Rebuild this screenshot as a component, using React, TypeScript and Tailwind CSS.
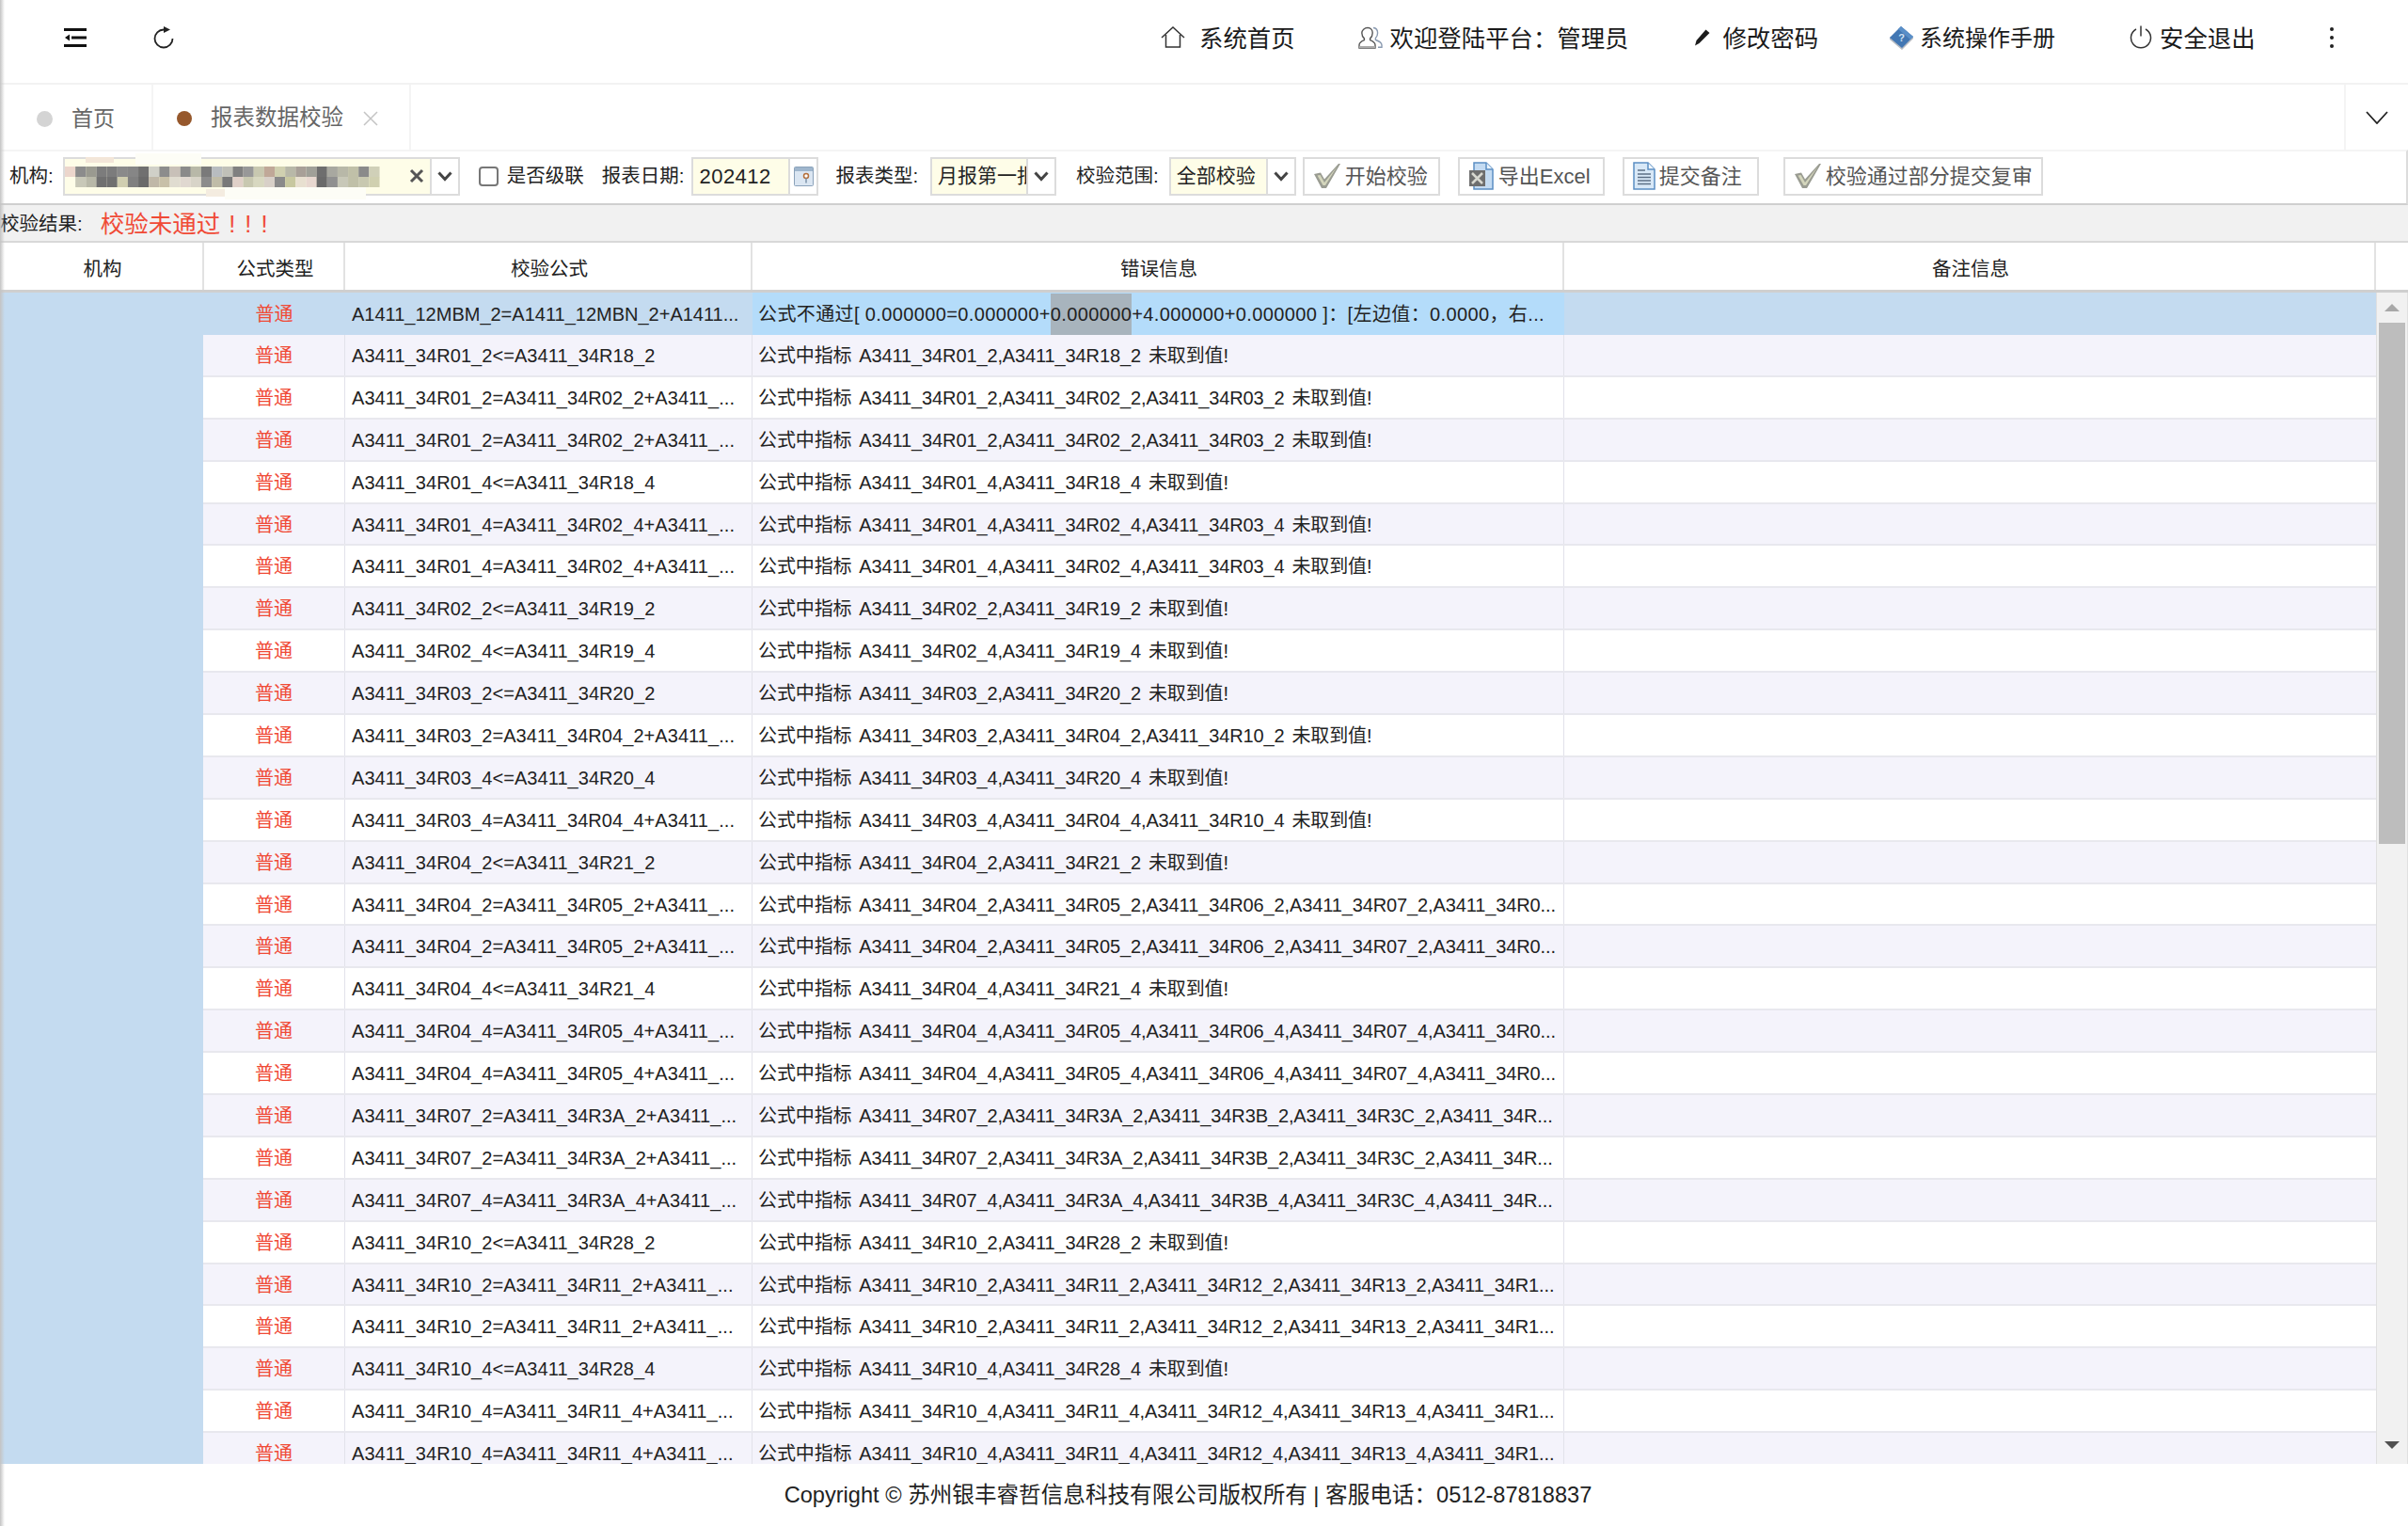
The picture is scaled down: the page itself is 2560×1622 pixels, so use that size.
import { ReactNode } from "react";

type Row = { formula: string; message: string };

const msg = (indicators: string) => `公式中指标 ${indicators} 未取到值!`;

const rows: Row[] = [
  { formula: "A3411_34R01_2<=A3411_34R18_2", message: msg("A3411_34R01_2,A3411_34R18_2") },
  { formula: "A3411_34R01_2=A3411_34R02_2+A3411_...", message: msg("A3411_34R01_2,A3411_34R02_2,A3411_34R03_2") },
  { formula: "A3411_34R01_2=A3411_34R02_2+A3411_...", message: msg("A3411_34R01_2,A3411_34R02_2,A3411_34R03_2") },
  { formula: "A3411_34R01_4<=A3411_34R18_4", message: msg("A3411_34R01_4,A3411_34R18_4") },
  { formula: "A3411_34R01_4=A3411_34R02_4+A3411_...", message: msg("A3411_34R01_4,A3411_34R02_4,A3411_34R03_4") },
  { formula: "A3411_34R01_4=A3411_34R02_4+A3411_...", message: msg("A3411_34R01_4,A3411_34R02_4,A3411_34R03_4") },
  { formula: "A3411_34R02_2<=A3411_34R19_2", message: msg("A3411_34R02_2,A3411_34R19_2") },
  { formula: "A3411_34R02_4<=A3411_34R19_4", message: msg("A3411_34R02_4,A3411_34R19_4") },
  { formula: "A3411_34R03_2<=A3411_34R20_2", message: msg("A3411_34R03_2,A3411_34R20_2") },
  { formula: "A3411_34R03_2=A3411_34R04_2+A3411_...", message: msg("A3411_34R03_2,A3411_34R04_2,A3411_34R10_2") },
  { formula: "A3411_34R03_4<=A3411_34R20_4", message: msg("A3411_34R03_4,A3411_34R20_4") },
  { formula: "A3411_34R03_4=A3411_34R04_4+A3411_...", message: msg("A3411_34R03_4,A3411_34R04_4,A3411_34R10_4") },
  { formula: "A3411_34R04_2<=A3411_34R21_2", message: msg("A3411_34R04_2,A3411_34R21_2") },
  { formula: "A3411_34R04_2=A3411_34R05_2+A3411_...", message: "公式中指标 A3411_34R04_2,A3411_34R05_2,A3411_34R06_2,A3411_34R07_2,A3411_34R0..." },
  { formula: "A3411_34R04_2=A3411_34R05_2+A3411_...", message: "公式中指标 A3411_34R04_2,A3411_34R05_2,A3411_34R06_2,A3411_34R07_2,A3411_34R0..." },
  { formula: "A3411_34R04_4<=A3411_34R21_4", message: msg("A3411_34R04_4,A3411_34R21_4") },
  { formula: "A3411_34R04_4=A3411_34R05_4+A3411_...", message: "公式中指标 A3411_34R04_4,A3411_34R05_4,A3411_34R06_4,A3411_34R07_4,A3411_34R0..." },
  { formula: "A3411_34R04_4=A3411_34R05_4+A3411_...", message: "公式中指标 A3411_34R04_4,A3411_34R05_4,A3411_34R06_4,A3411_34R07_4,A3411_34R0..." },
  { formula: "A3411_34R07_2=A3411_34R3A_2+A3411_...", message: "公式中指标 A3411_34R07_2,A3411_34R3A_2,A3411_34R3B_2,A3411_34R3C_2,A3411_34R..." },
  { formula: "A3411_34R07_2=A3411_34R3A_2+A3411_...", message: "公式中指标 A3411_34R07_2,A3411_34R3A_2,A3411_34R3B_2,A3411_34R3C_2,A3411_34R..." },
  { formula: "A3411_34R07_4=A3411_34R3A_4+A3411_...", message: "公式中指标 A3411_34R07_4,A3411_34R3A_4,A3411_34R3B_4,A3411_34R3C_4,A3411_34R..." },
  { formula: "A3411_34R10_2<=A3411_34R28_2", message: msg("A3411_34R10_2,A3411_34R28_2") },
  { formula: "A3411_34R10_2=A3411_34R11_2+A3411_...", message: "公式中指标 A3411_34R10_2,A3411_34R11_2,A3411_34R12_2,A3411_34R13_2,A3411_34R1..." },
  { formula: "A3411_34R10_2=A3411_34R11_2+A3411_...", message: "公式中指标 A3411_34R10_2,A3411_34R11_2,A3411_34R12_2,A3411_34R13_2,A3411_34R1..." },
  { formula: "A3411_34R10_4<=A3411_34R28_4", message: msg("A3411_34R10_4,A3411_34R28_4") },
  { formula: "A3411_34R10_4=A3411_34R11_4+A3411_...", message: "公式中指标 A3411_34R10_4,A3411_34R11_4,A3411_34R12_4,A3411_34R13_4,A3411_34R1..." },
  { formula: "A3411_34R10_4=A3411_34R11_4+A3411_...", message: "公式中指标 A3411_34R10_4,A3411_34R11_4,A3411_34R12_4,A3411_34R13_4,A3411_34R1..." },
];

// pixelated organisation name
const mosaicTop = ["#ecd6cc", "#8c8c8c", "#9a9a90", "#7c7c7c", "#7c7c7c", "#8a8a8a", "#868686", "#707070", "#d0d0c8", "#8c8c8c", "#c8c0b8", "#8a8a8a", "#b8b8a8", "#7a7a7a", "#b8bcc0", "#c0c0b8", "#808080", "#989898", "#c8c8b0", "#c0a898", "#d0d0b0", "#b8b8a8", "#a8a098", "#a0a098", "#6e6e6e", "#a8a8a0", "#b8b8a8", "#c0c0a8", "#8a8a8a", "#d0d0b8"];
const mosaicBottom = ["#fefde8", "#c8c8b8", "#b8b8a8", "#707070", "#707070", "#d0ceb0", "#808080", "#6a6a6a", "#c0b8a8", "#c8c0a8", "#e0dcd0", "#e0d8d0", "#d8d4c8", "#8c8c8c", "#c0bca8", "#787878", "#e0d0c8", "#c8c8b0", "#d8d8c0", "#d8d0c8", "#8a8a8a", "#c8c8a0", "#e8e0d0", "#e8d8d0", "#6a6a6a", "#909090", "#c8c8b8", "#c0c0a8", "#c8c8b0", "#d0d0b0"];

const Mosaic = () => (
  <svg width="345" height="49" viewBox="0 0 345 49" className="-my-1 shrink-0">
    <rect x="75" y="0" width="70" height="12" fill="#fdfdf6" />
    <rect x="170" y="36" width="150" height="13" fill="#fdfdf6" />
    <rect x="22" y="4" width="30" height="6" fill="#f3e6d8" />
    <rect x="150" y="38" width="20" height="8" fill="#f4ece0" />
    {mosaicTop.map((fill, i) => (
      <rect key={i} x={i * 11.15} y="14" width="11.2" height="11.2" fill={fill} />
    ))}
    {mosaicBottom.map((fill, i) => (
      <rect key={i} x={i * 11.15} y="25" width="11.2" height="11" fill={fill} />
    ))}
  </svg>
);

const ToggleIcon = () => (
  <svg width="24" height="20" viewBox="0 0 24 20" className="shrink-0">
    <rect x="0" y="0" width="24" height="3" fill="#111" />
    <rect x="8" y="8.5" width="16" height="3" fill="#111" />
    <path d="M1 10l5-3.5v7z" fill="#111" />
    <rect x="0" y="17" width="24" height="3" fill="#111" />
  </svg>
);

const RefreshIcon = () => (
  <svg width="22" height="24" viewBox="0 0 22 24" fill="none" className="shrink-0">
    <path d="M20.5 13a9.5 9.5 0 1 1-9.5-9.5h1" stroke="#222" strokeWidth="1.8" />
    <path d="M11 0l7 3.5-7 3.5z" fill="#222" />
  </svg>
);

const HomeIcon = () => (
  <svg width="26" height="23" viewBox="0 0 26 23" fill="none" className="shrink-0">
    <path d="M1 12L13 1l12 11" stroke="#333" strokeWidth="1.5" />
    <path d="M5.5 9v13h15V9" stroke="#333" strokeWidth="1.5" />
  </svg>
);

const UserIcon = () => (
  <svg width="26" height="24" viewBox="0 0 26 24" fill="none" className="shrink-0">
    <path d="M10 1.5c3.4 0 5.2 2.6 5.2 5.6 0 2.6-1.2 4.6-2.6 5.8v1.6c2.4 1 5.4 2.2 5.4 5.2v3.3H1v-3.3c0-3 3-4.2 5.4-5.200v-1.600C5 11.700 3.800 9.700 3.800 7.100c0-3 2.800-5.600 6.200-5.600z" stroke="#555" strokeWidth="1.4" />
    <path d="M16 1.500c3 .3 4.600 2.800 4.600 5.600 0 2.500-1 4.300-2.200 5.500v1.800c2.600 1 6.600 2.400 6.600 5.600v2.300h-4" stroke="#8a9ab0" strokeWidth="1.4" />
    <rect x="1" y="21" width="17" height="2" fill="#aaa" />
  </svg>
);

const PencilIcon = () => (
  <svg width="17" height="18" viewBox="0 0 17 18" className="shrink-0">
    <path d="M12.500 0.500l4 3.500L5.500 15 1 17.500 2.500 12z" fill="#1c1c1c" />
  </svg>
);

const BookIcon = () => (
  <svg width="27" height="27" viewBox="0 0 27 27" className="shrink-0">
    <path d="M1 15l13 11 12-12v-2L14 23 1 12z" fill="#b8bcc2" />
    <path d="M13 1l13 11-12 12L1 13z" fill="#4277b3" />
    <path d="M13 1l13 11-3 3L10 4z" fill="#5a8fc8" />
    <text x="13.500" y="17" fontSize="11" fontWeight="700" textAnchor="middle" fill="#cfe0f2" fontFamily="Liberation Sans">?</text>
  </svg>
);

const PowerIcon = () => (
  <svg width="24" height="25" viewBox="0 0 24 25" fill="none" className="shrink-0">
    <path d="M7 4a10.500 10.500 0 1 0 10 0" stroke="#333" strokeWidth="1.500" />
    <path d="M12 0.500v11" stroke="#333" strokeWidth="1.500" />
  </svg>
);

const CheckIcon = () => (
  <svg width="30" height="28" viewBox="0 0 30 28" className="shrink-0">
    <path d="M1 12l7-1.500 4 7L27 1h2L14 27H9z" fill="#9a9c92" />
    <path d="M4.500 13.500l3-.5 4.500 8L25.500 4 13 24h-2.500z" fill="#d4d6bc" />
  </svg>
);

const ExcelIcon = () => (
  <svg width="28" height="30" viewBox="0 0 28 30" className="shrink-0">
    <path d="M6 1h13l7 7v21H6z" fill="#c4dbf2" stroke="#5b8fc4" strokeWidth="1.500" />
    <path d="M19 1v7h7" fill="#eaf3fb" stroke="#5b8fc4" strokeWidth="1.500" />
    <rect x="1" y="9" width="17" height="17" fill="#6e6e6e" />
    <path d="M4 12l11 11M15 12L4 23" stroke="#d8d8d0" strokeWidth="2.500" />
  </svg>
);

const DocIcon = () => (
  <svg width="24" height="30" viewBox="0 0 24 30" className="shrink-0">
    <path d="M1 1h15l7 7v21H1z" fill="#d8e8f7" stroke="#5b8fc4" strokeWidth="1.500" />
    <path d="M16 1v7h7" fill="#f2f7fc" stroke="#5b8fc4" strokeWidth="1.500" />
    <path d="M5 9h8M5 13h14M5 16.500h14M5 20h14M5 23.500h14" stroke="#5c6f85" strokeWidth="1.400" />
  </svg>
);

const CalendarIcon = () => (
  <svg width="21" height="21" viewBox="0 0 21 21" className="shrink-0">
    <rect x="0.500" y="0.500" width="20" height="20" rx="1" fill="#dbe6f2" stroke="#8ba2ba" />
    <rect x="1" y="1" width="19" height="4" fill="#9fb6cd" />
    <circle cx="13" cy="10" r="2.500" fill="#fff" stroke="#b5703c" strokeWidth="1.500" />
    <path d="M13 12.500v5" stroke="#7d93aa" strokeWidth="1.500" />
  </svg>
);

const Chevron = () => (
  <svg width="16" height="11" viewBox="0 0 16 11" fill="none" className="shrink-0">
    <path d="M1.500 1.500L8 8.500l6.500-7" stroke="#444" strokeWidth="3" />
  </svg>
);

const NavItem = ({ icon, label, gap, className }: { icon: ReactNode; label: string; gap: string; className: string }) => (
  <div className={`flex items-center ${gap} ${className}`}>
    {icon}
    <span className="pt-[2px]">{label}</span>
  </div>
);

const SelectBox = ({ value, width }: { value: string; width: string }) => (
  <div className="flex h-[41px] border-2 border-[#dcdcdc] bg-white">
    <div className={`flex items-center overflow-hidden whitespace-nowrap bg-[#fefde8] pl-[6px] text-[21px] ${width}`}>{value}</div>
    <div className="flex w-[30px] items-center justify-center border-l-2 border-[#dcdcdc]">
      <Chevron />
    </div>
  </div>
);

const ToolButton = ({ icon, label, className }: { icon: ReactNode; label: string; className: string }) => (
  <button className={`flex h-[41px] items-center border-2 border-[#dcdcdc] bg-white pl-[9px] text-[22px] text-[#555] ${className}`}>
    {icon}
    <span className="ml-[4px] whitespace-nowrap">{label}</span>
  </button>
);

const HeaderCell = ({ label, className }: { label: string; className: string }) => (
  <div className={`flex items-center justify-center border-r-2 border-[#e2e2e2] pl-[3px] pt-[6px] ${className}`}>{label}</div>
);

const DataRow = ({ row, striped }: { row: Row; striped: boolean }) => (
  <div className={`flex h-[44.9px] shrink-0 border-b-2 border-[#e8e8ee] ${striped ? "bg-[#f4f3fb]" : "bg-white"}`}>
    <div className="flex w-[151px] shrink-0 items-center justify-center border-r border-[#e2e2ea] pt-[1px] text-[#f04a36]">普通</div>
    <div className="flex w-[433px] shrink-0 items-center whitespace-nowrap border-r border-[#e2e2ea] pl-[7px] pt-[1px] tracking-[0.06px]">{row.formula}</div>
    <div className="flex w-[863px] shrink-0 items-center whitespace-nowrap border-r border-[#e2e2ea] pl-[6px] pt-[1px] tracking-[-0.12px] [word-spacing:2.5px]">{row.message}</div>
    <div className="flex-1" />
  </div>
);

const SelectedRow = () => (
  <div className="flex h-[45px] shrink-0 bg-[#c4dbf0]">
    <div className="flex w-[151px] shrink-0 items-center justify-center text-[#f04a36]">普通</div>
    <div className="flex w-[433px] shrink-0 items-center whitespace-nowrap pl-[7px]">A1411_12MBM_2=A1411_12MBN_2+A1411...</div>
    <div className="flex w-[863px] shrink-0 items-center whitespace-pre bg-[#b4dcfa] pl-[6px] tracking-[0.38px]">
      <span>公式不通过[ 0.000000=0.000000+</span>
      <span className="bg-[#a8b4bd] py-[7px]">0.000000</span>
      <span>+4.000000+0.000000 ]：[左边值：0.0000，右...</span>
    </div>
    <div className="flex-1" />
  </div>
);

const App = () => {
  return (
    <div className="relative flex h-screen w-full flex-col overflow-hidden bg-white font-['Liberation_Sans','Noto_Sans_CJK_SC',sans-serif] text-[20px] text-[#222]">
      {/* sidebar shadow on the left edge */}
      <div className="pointer-events-none absolute inset-y-0 left-0 z-10 w-[5px] bg-gradient-to-r from-[#c4c4c4] to-transparent" />

      {/* top bar */}
      <header className="flex h-[90px] shrink-0 items-center border-b-2 border-[#f2f2f2] pb-[8px] text-[25.4px] text-[#1a1a1a]">
        <div className="ml-[68px]">
          <ToggleIcon />
        </div>
        <div className="ml-[71px]">
          <RefreshIcon />
        </div>
        <NavItem icon={<HomeIcon />} label="系统首页" gap="gap-[15px]" className="ml-[1049px]" />
        <NavItem icon={<UserIcon />} label="欢迎登陆平台：管理员" gap="gap-[8px]" className="ml-[67px]" />
        <NavItem icon={<PencilIcon />} label="修改密码" gap="gap-[13px]" className="ml-[70px]" />
        <NavItem icon={<BookIcon />} label="系统操作手册" gap="gap-[6px]" className="ml-[75px] text-[24px]" />
        <NavItem icon={<PowerIcon />} label="安全退出" gap="gap-[8px]" className="ml-[79px]" />
        <div className="ml-[79px] flex flex-col gap-[5px]">
          <span className="size-[4px] rounded-full bg-[#222]" />
          <span className="size-[4px] rounded-full bg-[#222]" />
          <span className="size-[4px] rounded-full bg-[#222]" />
        </div>
      </header>

      {/* tabs */}
      <nav className="flex h-[69px] shrink-0 text-[23px] text-[#666]">
        <div className="flex w-[163px] items-center border-r-2 border-[#f4f4f4] pl-[39px] pt-[3px]">
          <span className="size-[17px] rounded-full bg-[#d4d4d4]" />
          <span className="ml-[20px]">首页</span>
        </div>
        <div className="flex w-[274px] items-center border-r-2 border-[#f4f4f4] pl-[25px] pt-[3px]">
          <span className="size-[16px] rounded-full bg-[#96582c]" />
          <span className="ml-[20px] text-[23.5px]">报表数据校验</span>
          <svg width="16" height="16" viewBox="0 0 16 16" fill="none" className="ml-[21px]">
            <path d="M1 1l14 14M15 1L1 15" stroke="#c4c4c4" strokeWidth="1.500" />
          </svg>
        </div>
        <div className="ml-auto flex w-[68px] items-center justify-center border-l-2 border-[#f4f4f4]">
          <svg width="24" height="14" viewBox="0 0 24 14" fill="none">
            <path d="M1 1l11 12L23 1" stroke="#222" strokeWidth="1.800" />
          </svg>
        </div>
      </nav>

      {/* filter toolbar */}
      <div className="flex h-[59px] shrink-0 items-center border-y-2 border-r-2 border-t-[#f4f4f4] border-r-[#dcdcdc] border-b-[#cfcfcf] pb-[3px] pl-[10px] text-[20.5px]">
        <span>机构:</span>
        <div className="ml-[10px] flex h-[41px] w-[422px] border-2 border-[#dcdcdc] bg-white">
          <div className="flex w-[388px] items-center overflow-visible bg-[#fefde8]">
            <Mosaic />
            <svg width="16" height="16" viewBox="0 0 16 16" fill="none" className="ml-[21px] shrink-0">
              <path d="M2 2l12 12M14 2L2 14" stroke="#555" strokeWidth="3" />
            </svg>
          </div>
          <div className="flex flex-1 items-center justify-center border-l-2 border-[#dcdcdc]">
            <Chevron />
          </div>
        </div>
        <input type="checkbox" readOnly className="ml-[20px] size-[21px] appearance-none rounded-[4px] border-2 border-[#777] bg-white" />
        <span className="ml-[9px]">是否级联</span>
        <span className="ml-[19px]">报表日期:</span>
        <div className="ml-[8px] flex h-[41px] w-[135px] border-2 border-[#dcdcdc] bg-white">
          <div className="flex w-[101px] items-center bg-[#fefde8] pl-[6px] text-[22px] tracking-[0.5px]">202412</div>
          <div className="flex flex-1 items-center justify-center border-l-2 border-[#dcdcdc]">
            <CalendarIcon />
          </div>
        </div>
        <span className="ml-[18px]">报表类型:</span>
        <div className="ml-[13px]">
          <SelectBox value="月报第一批" width="w-[100px]" />
        </div>
        <span className="ml-[21px]">校验范围:</span>
        <div className="ml-[11px]">
          <SelectBox value="全部校验" width="w-[101px]" />
        </div>
        <ToolButton icon={<CheckIcon />} label="开始校验" className="ml-[7px] w-[146px]" />
        <ToolButton icon={<ExcelIcon />} label="导出Excel" className="ml-[19px] w-[156px]" />
        <ToolButton icon={<DocIcon />} label="提交备注" className="ml-[19px] w-[145px]" />
        <ToolButton icon={<CheckIcon />} label="校验通过部分提交复审" className="ml-[26px] w-[276px]" />
      </div>

      {/* result */}
      <div className="flex h-[40px] shrink-0 items-center border-b-2 border-[#d8d8d8] bg-[#f1f1f1] pt-[3px] text-[20.5px]">
        <span>校验结果:</span>
        <span className="ml-[19px] text-[25.5px] text-[#f04a36]">校验未通过</span>
        <span className="ml-[9px] text-[25.5px] tracking-[10px] text-[#f04a36]">!!!</span>
      </div>

      {/* table header */}
      <div className="flex h-[53px] shrink-0 border-b-[3px] border-[#cfcfcf] text-[20.5px]">
        <HeaderCell label="机构" className="w-[217px]" />
        <HeaderCell label="公式类型" className="w-[150px]" />
        <HeaderCell label="校验公式" className="w-[433px]" />
        <HeaderCell label="错误信息" className="w-[863px]" />
        <HeaderCell label="备注信息" className="w-[863px]" />
        <div className="flex-1" />
      </div>

      {/* table body */}
      <div className="flex min-h-0 flex-1 overflow-hidden">
        <div className="w-[216px] shrink-0 bg-[#c4dbf0]" />
        <div className="flex min-w-0 flex-1 flex-col overflow-hidden">
          <SelectedRow />
          {rows.map((row, i) => (
            <DataRow key={i} row={row} striped={i % 2 === 0} />
          ))}
        </div>
        <div className="flex w-[34px] shrink-0 flex-col items-center border-x border-[#e0e0e0] bg-[#f1f1f1]">
          <div className="flex h-[32px] shrink-0 items-center justify-center">
            <span className="h-0 w-0 border-x-[8px] border-b-[8px] border-x-transparent border-b-[#a8a8a8]" />
          </div>
          <div className="h-[554px] w-[28px] shrink-0 bg-[#bdbdbd]" />
          <div className="mt-auto flex h-[36px] shrink-0 items-start justify-center pt-[12px]">
            <span className="h-0 w-0 border-x-[8px] border-t-[8px] border-x-transparent border-t-[#505050]" />
          </div>
        </div>
      </div>

      {/* footer */}
      <footer className="flex h-[66px] shrink-0 items-center justify-center pr-[34px] pt-[2px] text-[23.6px]">
        Copyright © 苏州银丰睿哲信息科技有限公司版权所有 | 客服电话：0512-87818837
      </footer>
    </div>
  );
};

export default App;
